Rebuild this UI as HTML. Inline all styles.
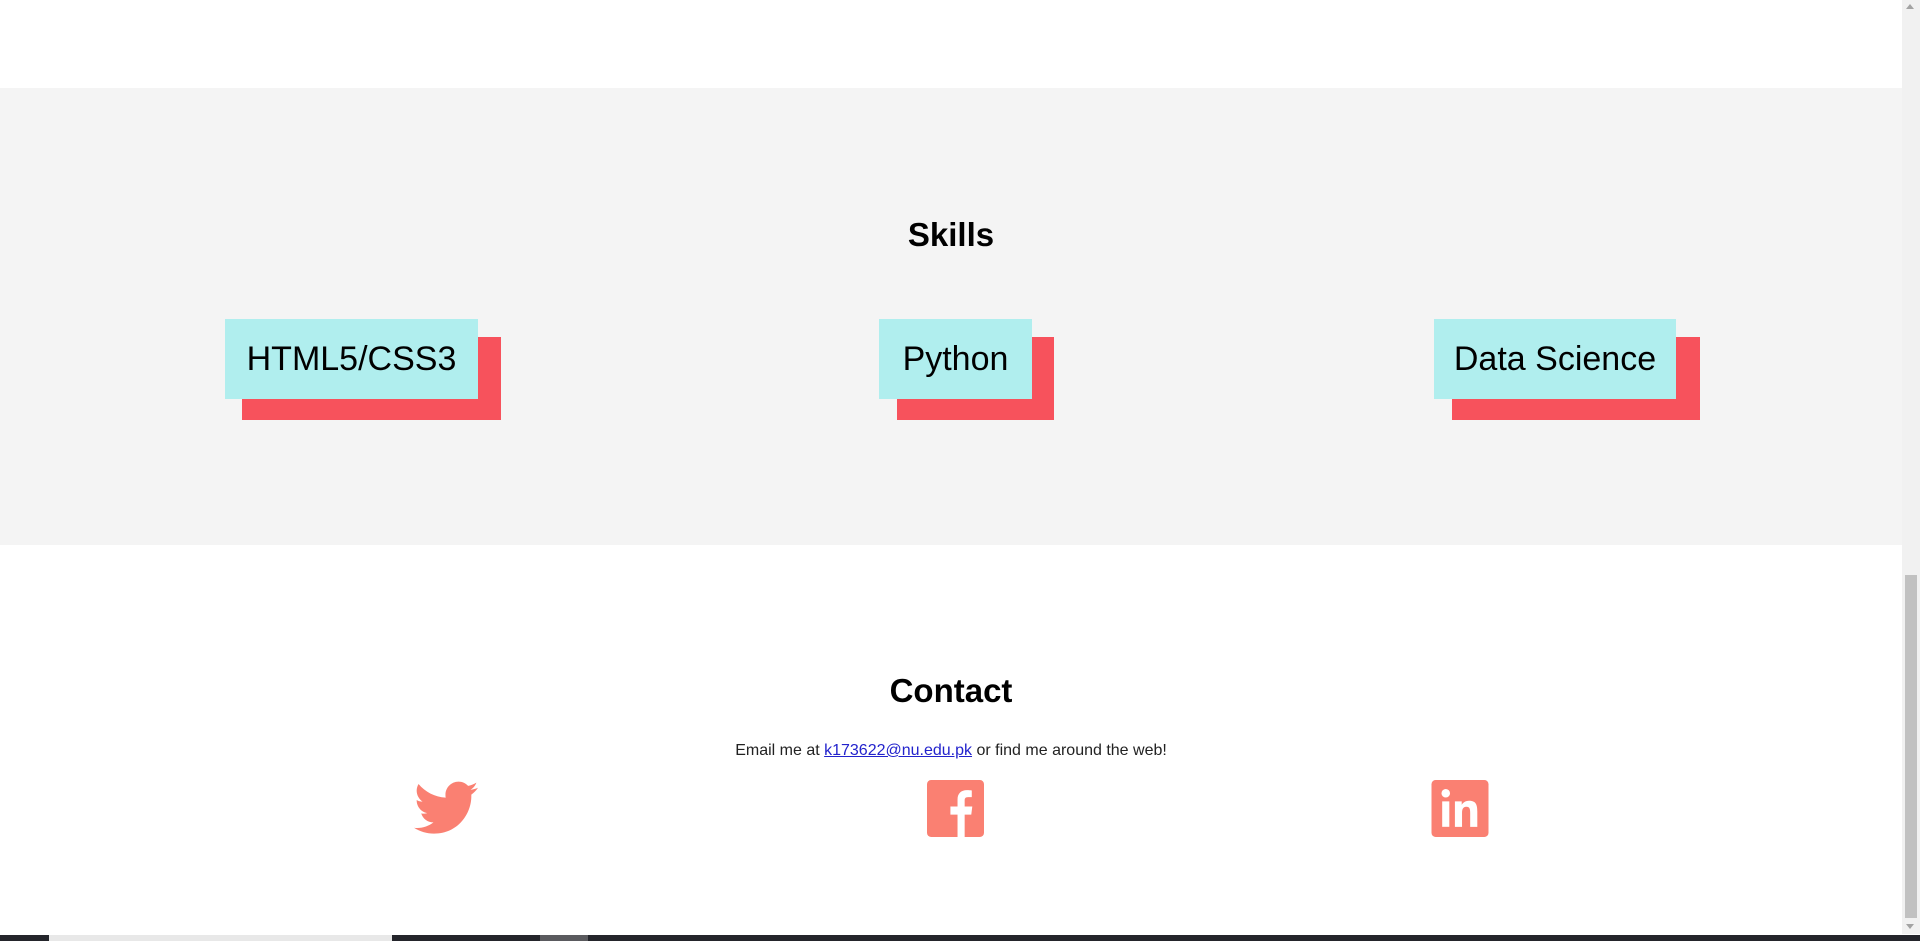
<!DOCTYPE html>
<html><head><meta charset="utf-8"><style>
html,body{margin:0;padding:0;width:1920px;height:941px;overflow:hidden;background:#fff;font-family:"Liberation Sans",sans-serif;color:#000}
.abs{position:absolute}
#gray{left:0;top:88px;width:1902px;height:457px;background:#f4f4f4}
h2{position:absolute;margin:0;width:1902px;left:0;text-align:center;font-size:33px;font-weight:bold;line-height:40px}
.sh{background:#f7525c}
.bx{background:#b0eeee;font-size:34px;line-height:80px;text-align:center}
#sb{left:1902px;top:0;width:18px;height:934px;background:#f1f1f1}
#thumb{left:1905px;top:575px;width:12px;height:343px;background:#c1c1c1}
#bar{left:0;top:935px;width:1920px;height:6px;background:#24252b}
</style></head><body>
<div id="gray" class="abs"></div>
<h2 style="top:215px">Skills</h2>

<div class="abs sh" style="left:242px;top:337px;width:259px;height:83px"></div>
<div class="abs bx" style="left:225px;top:319px;width:253px;height:80px">HTML5/CSS3</div>

<div class="abs sh" style="left:897px;top:337px;width:157px;height:83px"></div>
<div class="abs bx" style="left:879px;top:319px;width:153px;height:80px">Python</div>

<div class="abs sh" style="left:1452px;top:337px;width:248px;height:83px"></div>
<div class="abs bx" style="left:1434px;top:319px;width:242px;height:80px">Data Science</div>

<h2 style="top:671px">Contact</h2>
<div class="abs" style="left:0;width:1902px;top:741px;text-align:center;font-size:16px;line-height:20px;color:#222">Email me at <a href="#" style="color:#2222cc">k173622@nu.edu.pk</a> or find me around the web!</div>

<svg class="abs" style="left:414px;top:780px" width="64" height="56" viewBox="0 0 24 20">
<path fill="#fa8072" d="M24 2.4c-.9.4-1.8.6-2.8.8 1-.6 1.8-1.6 2.2-2.7-1 .6-2 1-3.1 1.2C19.4.7 18.1.1 16.7.1c-2.7 0-4.9 2.2-4.9 4.9 0 .4 0 .8.1 1.1C7.8 5.9 4.2 4 1.7 1 1.3 1.700 1 2.6 1 3.5c0 1.7.9 3.2 2.200 4.1-.8 0-1.6-.2-2.2-.6v.1c0 2.4 1.7 4.4 3.9 4.8-.4.1-.8.2-1.3.2-.3 0-.6 0-.9-.1.6 2 2.4 3.4 4.6 3.4-1.7 1.3-3.8 2.1-6.1 2.1-.4 0-.8 0-1.2-.1 2.2 1.4 4.8 2.2 7.5 2.2 9.1 0 14-7.5 14-14v-.6c1-.7 1.8-1.6 2.5-2.6z"/></svg>

<svg class="abs" style="left:927px;top:780px" width="57" height="57" viewBox="0 0 56 56">
<rect width="56" height="56" rx="4" fill="#fa8072"/>
<path fill="#fff" d="M30 56V34h-7v-8h7v-7c0-6 4-9 9-9 2.5 0 4.5.2 5 .3v6.5h-3.5c-3 0-3.5 1.4-3.5 3.4V26h7.5l-1 8H37v22z"/></svg>

<svg class="abs" style="left:1431px;top:780px" width="58" height="57" viewBox="0 0 56 56">
<rect width="56" height="56" rx="4" fill="#fa8072"/>
<circle cx="14" cy="13" r="4.2" fill="#fff"/>
<rect x="10.5" y="21" width="7" height="25" fill="#fff"/>
<path fill="#fff" d="M23 21h6.7v3.4c1-1.8 3.4-4 7.2-4 7.2 0 8.1 4.6 8.1 10.6V46h-7V32.6c0-3.2-.1-6.300-3.7-6.3-3.6 0-4.3 2.8-4.3 6.1V46h-7z"/></svg>

<div id="sb" class="abs"></div>
<div id="thumb" class="abs"></div>
<div class="abs" style="left:1906px;top:4px;width:0;height:0;border-left:4px solid transparent;border-right:4px solid transparent;border-bottom:5px solid #a3a3a3"></div>
<div class="abs" style="left:1906px;top:924px;width:0;height:0;border-left:4px solid transparent;border-right:4px solid transparent;border-top:5px solid #a3a3a3"></div>
<div id="bar" class="abs"></div>
<div class="abs" style="left:49px;top:935px;width:343px;height:6px;background:#e8e8e8"></div>
<div class="abs" style="left:540px;top:935px;width:48px;height:6px;background:#5a5a5e"></div>
</body></html>
